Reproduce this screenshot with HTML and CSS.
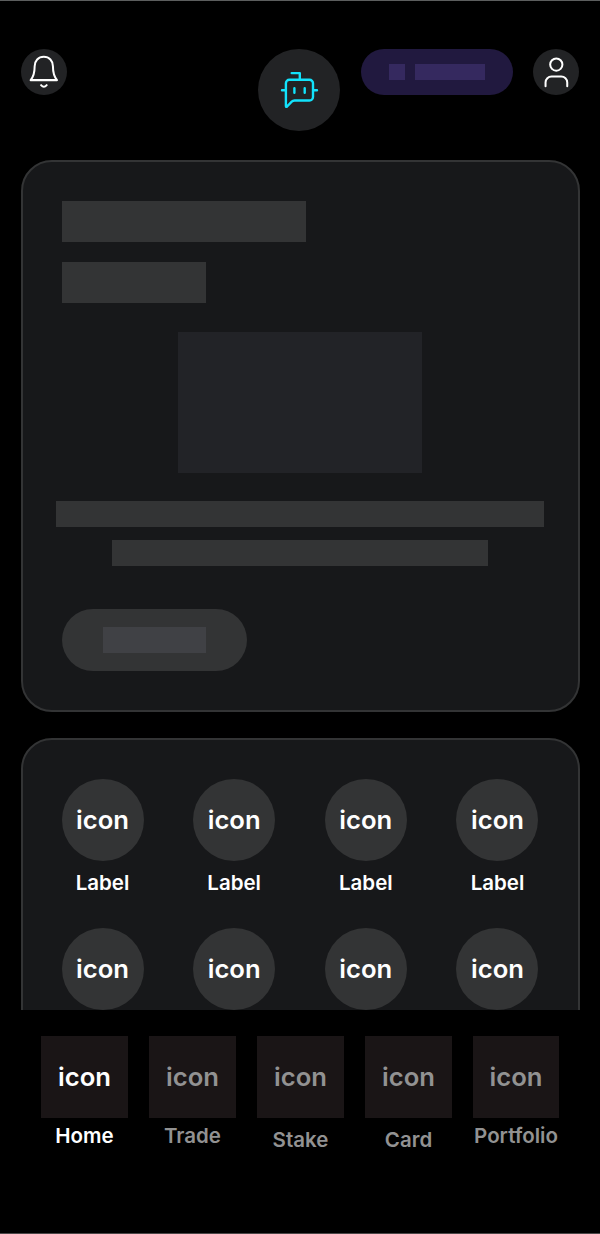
FILE: index.html
```html
<!DOCTYPE html>
<html lang="en">
<head>
<meta charset="utf-8">
<title>Home</title>
<link rel="stylesheet" href="styles.css">
</head>
<body>
<div class="screen">
  <header class="header">
    <button class="round" aria-label="Notifications">
      <svg viewBox="0 0 46 46"><path d="M9.6 31C12.2 28 13.6 24.5 13.6 17.3C13.6 11.6 17.2 7.8 22.7 7.8S31.8 11.6 31.8 17.3C31.8 24.5 33.2 28 35.9 31Z"/><path d="M20 36Q22.8 39.2 25.6 36"/></svg>
    </button>
    <button class="round bot" aria-label="Assistant">
      <svg viewBox="0 0 82 82"><path d="M27.9 34.3a3.5 3.5 0 0 1 3.5-3.5H51.5a3.5 3.5 0 0 1 3.5 3.5V48a3.5 3.5 0 0 1-3.5 3.5H36.5Q34.9 51.5 33.7 52.7L29.1 57.5Q27.9 58.5 27.9 56.9ZM24 41.3h3.9M55 41.3h4M33.7 24.1h8.1v6.7M36.4 39.2v4.5M46.7 39.2v4.5"/></svg>
    </button>
    <div class="pill"><span class="pill-mark"></span><span class="pill-text"></span></div>
    <button class="round" aria-label="Profile">
      <svg viewBox="0 0 46 46"><circle cx="23.2" cy="15.5" r="6.1"/><path d="M12.5 37V33.4a6 6 0 0 1 6-6h9.6a6 6 0 0 1 6 6V37"/></svg>
    </button>
  </header>
  <main class="content">
    <section class="card hero">
      <div class="bar title"></div>
      <div class="bar subtitle"></div>
      <div class="media"></div>
      <div class="bar line"></div>
      <div class="bar line short"></div>
      <div class="action"><span class="action-text"></span></div>
    </section>
    <section class="card shortcuts">
      <div class="shortcut"><span class="disc">icon</span><span class="label">Label</span></div>
      <div class="shortcut"><span class="disc">icon</span><span class="label">Label</span></div>
      <div class="shortcut"><span class="disc">icon</span><span class="label">Label</span></div>
      <div class="shortcut"><span class="disc">icon</span><span class="label">Label</span></div>
      <div class="shortcut"><span class="disc">icon</span></div>
      <div class="shortcut"><span class="disc">icon</span></div>
      <div class="shortcut"><span class="disc">icon</span></div>
      <div class="shortcut"><span class="disc">icon</span></div>
    </section>
  </main>
  <nav class="nav">
    <a class="tab active"><span class="tile">icon</span><span class="label">Home</span></a>
    <a class="tab"><span class="tile">icon</span><span class="label">Trade</span></a>
    <a class="tab low"><span class="tile">icon</span><span class="label">Stake</span></a>
    <a class="tab low"><span class="tile">icon</span><span class="label">Card</span></a>
    <a class="tab"><span class="tile">icon</span><span class="label">Portfolio</span></a>
  </nav>
</div>
</body>
</html>
```

FILE: styles.css
```css
* { box-sizing: border-box; }
body {
  margin: 0;
  background: #000;
  color: #fff;
  font-family: Inter, "Liberation Sans", sans-serif;
  font-weight: 600;
}
.screen {
  width: 600px;
  height: 1234px;
  display: flex;
  flex-direction: column;
  overflow: hidden;
  border-top: 1px solid #5c5e5e;
  border-bottom: 1px solid #4a4748;
}
.header {
  display: flex;
  align-items: flex-start;
  height: 159px;
  padding: 48.3px 20.5px 0;
  flex: none;
}
.round {
  width: 46.2px;
  height: 46.2px;
  padding: 0;
  border: 0;
  border-radius: 50%;
  background: #222325;
  color: #fff;
  flex: none;
}
.round svg {
  display: block;
  width: 100%;
  height: 100%;
  fill: none;
  stroke: currentColor;
  stroke-width: 2;
  stroke-linecap: round;
  stroke-linejoin: round;
}
.bot {
  width: 82px;
  height: 82px;
  margin-left: 191.8px;
  color: #12e2fb;
}
.bot svg { stroke-width: 2.4; }
.pill {
  display: flex;
  align-items: center;
  justify-content: center;
  gap: 10px;
  width: 151.5px;
  height: 46.2px;
  margin: 0 20.6px;
  border-radius: 24px;
  background: #21193f;
}
.pill-mark, .pill-text { height: 16px; background: #35295f; }
.pill-mark { width: 16px; }
.pill-text { width: 69.5px; }
.content {
  display: flex;
  flex-direction: column;
  gap: 26px;
  height: 850px;
  padding: 0 20.5px;
  overflow: hidden;
  flex: none;
}
.card {
  border: 2px solid #333435;
  border-radius: 31px;
  background: #17181a;
  flex: none;
}
.hero {
  display: flex;
  flex-direction: column;
  height: 552px;
  padding: 38.5px 33.5px 0;
}
.bar { height: 41px; background: #333435; }
.title { width: 244.5px; margin-left: 5.5px; }
.subtitle { width: 144px; margin: 20.5px 0 0 5.5px; }
.media {
  width: 244px;
  height: 141px;
  margin: 29px auto 28px;
  background: #222327;
}
.line { height: 26px; }
.short { width: 375.5px; margin: 12.8px auto 0; }
.action {
  display: flex;
  align-items: center;
  justify-content: center;
  width: 185px;
  height: 61.5px;
  margin: 43.5px 0 0 5.5px;
  border-radius: 31px;
  background: #333435;
}
.action-text { width: 103px; height: 26px; background: #404145; }
.shortcuts {
  display: grid;
  grid-template-columns: repeat(4, 82px);
  justify-content: space-between;
  align-content: start;
  row-gap: 32px;
  height: 400px;
  padding: 39px 39px 0;
}
.shortcut, .tab {
  display: flex;
  flex-direction: column;
  align-items: center;
}
.disc, .tile {
  display: flex;
  align-items: center;
  justify-content: center;
  height: 82px;
  padding-bottom: 2px;
  font-size: 25.64px;
}
.disc { width: 82px; border-radius: 50%; background: #333435; }
.label { font-size: 20.5px; line-height: 26px; }
.shortcut .label { margin-top: 9px; }
.nav {
  display: grid;
  grid-template-columns: repeat(4, 87px) 86px;
  gap: 21px;
  padding: 26px 41px 0;
}
.tab { color: #929292; }
.active { color: #fff; }
.tile { width: 100%; background: #1a1516; }
.tab .label { margin-top: 5px; }
.low .label { margin-top: 9px; }
```
